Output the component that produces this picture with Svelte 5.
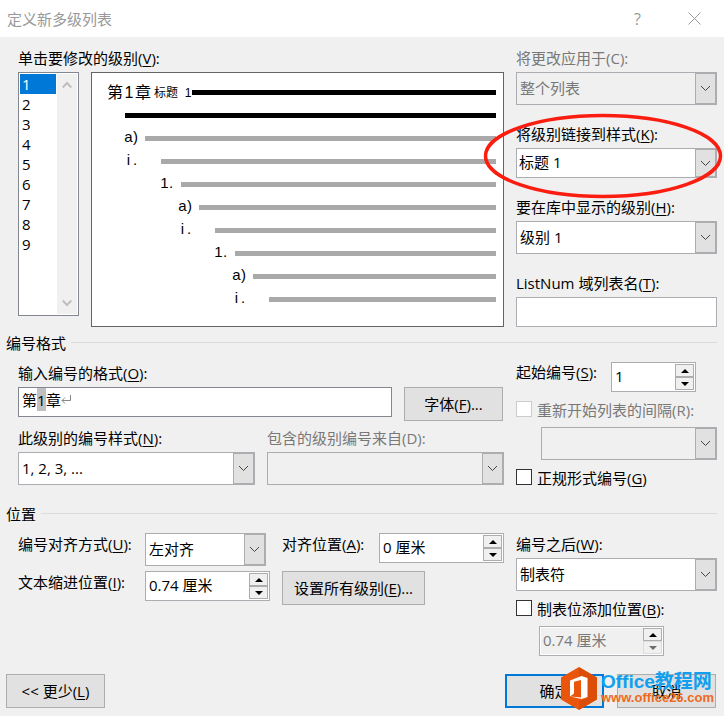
<script>
  const levels = [1, 2, 3, 4, 5, 6, 7, 8, 9];

  let selected = $state(1);

  // indent = where the number starts, bar = where the grey rule starts
  const previewRows = [
    { mark: '', indent: 33, bar: 33, dark: true },
    { mark: 'a)', indent: 32, bar: 53 },
    { mark: 'i.', indent: 32, bar: 69 },
    { mark: '1.', indent: 68, bar: 89 },
    { mark: 'a)', indent: 86, bar: 107 },
    { mark: 'i.', indent: 86, bar: 123 },
    { mark: '1.', indent: 122, bar: 143 },
    { mark: 'a)', indent: 140, bar: 161 },
    { mark: 'i.', indent: 140, bar: 177 }
  ];
</script>

{#snippet caption(text, key, tail = ':', off = false)}
  <span class="caption" class:off>{text}({#if off}{key}{:else}<u>{key}</u>{/if}){tail}</span>
{/snippet}

{#snippet combo(value, size = '', off = false)}
  <div class="combo {size}" class:off>
    <span class="value">{value}</span>
    <span class="drop">
      <svg width="11" height="7" viewBox="0 0 11 7"><path d="M1 1l4.5 4.5L10 1" /></svg>
    </span>
  </div>
{/snippet}

{#snippet spinner(value, size = '', off = false)}
  <div class="spinner {size}" class:off>
    <span class="value">{value}</span>
    <span class="steps">
      <span class="step"><svg width="8" height="4" viewBox="0 0 8 4"><path d="M0 4l4-4 4 4z" /></svg></span>
      <span class="step down"><svg width="8" height="4" viewBox="0 0 8 4"><path d="M0 0l4 4 4-4z" /></svg></span>
    </span>
  </div>
{/snippet}

<div class="dialog">
  <header>
    <span class="title">定义新多级列表</span>
    <span class="help">?</span>
    <svg class="close" width="13" height="13" viewBox="0 0 13 13"><path d="M.5.5l12 12M12.5.5l-12 12" /></svg>
  </header>

  <section class="top">
    <div class="main">
      {@render caption('单击要修改的级别', 'V')}
      <div class="panes">
        <div class="list">
          <div class="items">
            {#each levels as level}
              <button class="item" class:selected={selected === level} onclick={() => (selected = level)}>{level}</button>
            {/each}
          </div>
          <div class="scroll">
            <svg width="10" height="8" viewBox="0 0 10 8"><path d="M.7 6.5L5 2l4.3 4.5" /></svg>
            <svg width="10" height="8" viewBox="0 0 10 8"><path d="M.7 1.5L5 6l4.3-4.5" /></svg>
          </div>
        </div>
        <div class="preview">
          <div class="line first">
            <span class="chapter">第<i>1</i>章</span>
            <span class="heading">标题&nbsp; 1</span>
            <span class="bar dark"></span>
          </div>
          {#each previewRows as row}
            <div class="line" style="padding-left: {row.indent}px">
              <span class="mark" style="width: {row.bar - row.indent}px">
                {#each row.mark as ch, i}<span class="cell" class:lead={i === 0}>{ch}</span>{/each}
              </span>
              <span class="bar" class:dark={row.dark}></span>
            </div>
          {/each}
        </div>
      </div>
    </div>
    <div class="side">
      {@render caption('将更改应用于', 'C', ':', true)}
      {@render combo('整个列表', '', true)}
      {@render caption('将级别链接到样式', 'K')}
      {@render combo('标题 1', 'short')}
      {@render caption('要在库中显示的级别', 'H')}
      {@render combo('级别 1')}
      {@render caption('ListNum 域列表名', 'T')}
      <div class="textbox"></div>
    </div>
  </section>

  <h2>编号格式</h2>
  <section class="format">
    <div class="main">
      {@render caption('输入编号的格式', 'O')}
      <div class="row">
        <div class="textbox format-text">第<mark>1</mark>章<svg width="11" height="10" viewBox="0 0 11 10"><path d="M9.5 0v5.5H1M4 2.5l-3 3 3 3" /></svg></div>
        <button class="push">字体(<u>F</u>)...</button>
      </div>
      <div class="row pair">
        <div>
          {@render caption('此级别的编号样式', 'N')}
          {@render combo('1, 2, 3, ...')}
        </div>
        <div>
          {@render caption('包含的级别编号来自', 'D', ':', true)}
          {@render combo('', '', true)}
        </div>
      </div>
    </div>
    <div class="side">
      <div class="row start">
        {@render caption('起始编号', 'S')}
        {@render spinner('1', 'small')}
      </div>
      <div class="check restart off"><span class="box"></span>{@render caption('重新开始列表的间隔', 'R', ':', true)}</div>
      {@render combo('', 'indented', true)}
      <div class="check legal"><span class="box"></span>{@render caption('正规形式编号', 'G', '')}</div>
    </div>
  </section>

  <h2>位置</h2>
  <section class="position">
    <div class="main grid">
      {@render caption('编号对齐方式', 'U')}
      {@render combo('左对齐', 'align')}
      <div class="row at">
        {@render caption('对齐位置', 'A')}
        {@render spinner('0 厘米')}
      </div>
      {@render caption('文本缩进位置', 'I')}
      {@render spinner('0.74 厘米')}
      <button class="push wide">设置所有级别(<u>E</u>)...</button>
    </div>
    <div class="side">
      {@render caption('编号之后', 'W')}
      {@render combo('制表符')}
      <div class="check tab"><span class="box"></span>{@render caption('制表位添加位置', 'B')}</div>
      {@render spinner('0.74 厘米', 'tabstop', true)}
    </div>
  </section>

  <footer>
    <button class="push">&lt;&lt; 更少(<u>L</u>)</button>
    <button class="push ok">确定</button>
    <button class="push">取消</button>
  </footer>

  <svg class="ring" width="242" height="88" viewBox="0 0 242 88"><ellipse cx="121" cy="44" rx="117.5" ry="40.5" /></svg>

  <div class="watermark">
    <svg width="36" height="43" viewBox="0 0 36 43">
      <path fill="#e9560b" d="M18 0l18 10.5v22L18 43 0 32.500v-22z" />
      <path fill="#d04304" d="M18 0l18 10.500v22L18 43V34l9-3V12l-9-3z" opacity=".5" />
      <path fill="#fff" fill-rule="evenodd" d="M9 13.500L20.500 9l6 2v19l-6 2L9 29.500l11 1V13l-7 1.700v11.800L9 29.500z" />
    </svg>
    <div class="brand">
      <strong>Office教程网</strong>
      <span>www.office26.com</span>
    </div>
  </div>
</div>

<style>
  :global(body) {
    margin: 0;
    background: #f0f0f0;
  }

  .dialog {
    position: relative;
    box-sizing: border-box;
    width: 724px;
    height: 716px;
    overflow: hidden;
    background: #f0f0f0;
    color: #000;
    font: 15px/20px 'Open Sans', 'Noto Sans CJK SC', sans-serif;
    white-space: nowrap;
  }

  .dialog * {
    box-sizing: border-box;
  }

  svg {
    display: block;
    fill: none;
  }

  button {
    padding: 0;
    font: inherit;
    color: inherit;
  }

  u {
    text-underline-offset: 2px;
    text-decoration-thickness: 1px;
  }

  /* Title bar */
  header {
    display: flex;
    align-items: center;
    height: 37px;
    padding: 0 23px 0 7px;
    background: #fff;
    color: #999;
  }

  .title {
    flex: 1;
  }

  .help {
    margin-right: 47px;
    font-size: 16px;
  }

  .close {
    stroke: #999;
  }

  /* Sections */
  section {
    display: flex;
    gap: 12px;
    padding: 0 7px 0 18px;
  }

  .main {
    width: 486px;
  }

  .side {
    width: 201px;
  }

  .top {
    height: 296px;
    padding-top: 11px;
  }

  .format {
    height: 151px;
    padding-top: 10px;
  }

  .position {
    height: 150px;
    padding-top: 9px;
  }

  h2 {
    display: flex;
    align-items: center;
    gap: 5px;
    height: 20px;
    margin: 0;
    padding: 0 7px 0 6px;
    font-size: 15px;
    font-weight: 400;
  }

  h2::after {
    content: '';
    flex: 1;
    height: 1px;
    margin-top: -1px;
    background: #dcdcdc;
  }

  .caption {
    display: block;
    height: 24px;
  }

  .caption.off {
    color: #787878;
  }

  .row {
    display: flex;
    gap: 12px;
  }

  /* Level list and preview */
  .panes {
    display: flex;
    align-items: flex-start;
    gap: 12px;
  }

  .list {
    display: flex;
    width: 61px;
    height: 244px;
    padding: 1px;
    border: 1px solid #828790;
    background: #fff;
  }

  .items {
    width: 37px;
  }

  .item {
    display: block;
    width: 36px;
    height: 20px;
    padding-left: 2px;
    border: 0;
    background: #fff;
    text-align: left;
  }

  .item.selected {
    background: #0078d7;
    color: #fff;
  }

  .scroll {
    flex: 1;
    display: flex;
    flex-direction: column;
    justify-content: space-between;
    align-items: center;
    padding: 7px 0;
    background: #f0f0f0;
  }

  .scroll svg {
    stroke: #bfbfbf;
    stroke-width: 2;
  }

  .preview {
    width: 413px;
    height: 255px;
    padding: 8px 7px 0 0;
    border: 1px solid #646464;
    background: #fff;
    font-family: 'Liberation Sans', 'Noto Sans CJK SC', sans-serif;
  }

  .line {
    display: flex;
    align-items: center;
    height: 23px;
  }

  .first {
    padding-left: 15px;
  }

  .chapter {
    display: flex;
    width: 47px;
    font-size: 16px;
  }

  .chapter i {
    width: 12px;
    font-style: normal;
    text-align: center;
  }

  .heading {
    width: 38px;
    font-size: 12px;
  }

  .mark {
    display: flex;
    font-size: 15px;
  }

  .cell {
    width: 9px;
    margin-top: -3px;
  }

  .cell.lead {
    text-align: center;
  }

  .bar {
    flex: 1;
    height: 5px;
    background: #a9a9a9;
  }

  .bar.dark {
    background: #000;
  }

  /* Fields */
  .textbox {
    height: 30px;
    border: 1px solid #abadb3;
    background: #fff;
  }

  .combo {
    display: flex;
    height: 33px;
    border: 1px solid #abadb3;
    background: #fff;
  }

  .combo.off {
    background: #f0f0f0;
    color: #787878;
  }

  .combo .value {
    flex: 1;
    padding-left: 3px;
    line-height: 31px;
  }

  .combo.short {
    height: 30px;
  }

  .combo.short .value {
    padding-left: 2px;
    line-height: 26px;
  }

  .drop {
    display: flex;
    align-items: center;
    justify-content: center;
    width: 21px;
    border: 1px solid #adadad;
    background: #e1e1e1;
  }

  .drop svg {
    stroke: #444;
  }

  .spinner {
    display: flex;
    width: 125px;
    height: 30px;
    padding: 1px;
    border: 1px solid #abadb3;
    background: #fff;
  }

  .spinner .value {
    flex: 1;
    padding-left: 2px;
    line-height: 25px;
  }

  .spinner.small {
    width: 85px;
  }

  .spinner.off .value {
    background: #f0f0f0;
    color: #787878;
  }

  .steps {
    width: 19px;
  }

  .step {
    display: flex;
    align-items: center;
    justify-content: center;
    height: 13px;
    border: 1px solid #adadad;
    background: #f0f0f0;
  }

  .step svg {
    fill: #000;
  }

  .off .down {
    border-color: #dcdcdc;
  }

  .off .down svg {
    fill: #6d6d6d;
  }

  .push {
    width: 99px;
    height: 34px;
    border: 1px solid #adadad;
    background: #e1e1e1;
  }

  .top .side .combo {
    margin-bottom: 19px;
  }

  /* Number format */
  .format-text {
    display: flex;
    width: 374px;
    padding-left: 3px;
    border-color: #828790;
    line-height: 24px;
  }

  .format-text mark {
    width: 9px;
    height: 23px;
    background: #c0c0c0;
  }

  .format-text svg {
    margin-top: 7px;
    stroke: #888;
  }

  .pair {
    padding-top: 7px;
  }

  .pair > div {
    flex: 1;
  }

  .start {
    gap: 0;
    margin-top: -1px;
  }

  .start .caption {
    width: 95px;
  }

  .check {
    display: flex;
    gap: 5px;
    height: 20px;
  }

  .box {
    width: 16px;
    height: 16px;
    margin-top: 1px;
    border: 1px solid #333;
    background: #fff;
  }

  .check.off .box {
    border-color: #ccc;
  }

  .restart {
    margin-top: 8px;
  }

  .indented {
    margin: 7px 0 0 25px;
  }

  .legal {
    margin-top: 8px;
  }

  /* Position */
  .grid {
    display: grid;
    grid-template-columns: 127px 137px 222px;
    grid-template-rows: 38px 34px;
    align-content: start;
  }

  .grid .caption {
    padding-top: 1px;
  }

  .grid .align {
    width: 121px;
  }

  .at {
    gap: 0;
  }

  .at .caption {
    width: 97px;
  }

  .wide {
    width: 143px;
  }

  .position .side {
    padding-top: 1px;
  }

  .tab {
    margin-top: 8px;
  }

  .tabstop {
    margin: 7px 0 0 23px;
  }

  /* Footer buttons */
  footer {
    display: flex;
    gap: 13px;
    padding: 0 8px 0 6px;
  }

  .ok {
    margin-left: auto;
    border: 2px solid #0078d7;
  }

  .ring {
    position: absolute;
    left: 482px;
    top: 112px;
    stroke: #fb1e10;
    stroke-width: 3.5;
  }

  .watermark {
    position: absolute;
    left: 561px;
    top: 667px;
    display: flex;
    gap: 4px;
  }

  .brand {
    padding-top: 5px;
    font-family: 'Liberation Sans', 'Noto Sans CJK SC', sans-serif;
  }

  .brand strong {
    display: block;
    color: #12a0ee;
    font-size: 19px;
    line-height: 20px;
    letter-spacing: 0;
  }

  .brand span {
    display: block;
    color: #ee6a1c;
    font-size: 13px;
    font-weight: 700;
    line-height: 12px;
  }
</style>
